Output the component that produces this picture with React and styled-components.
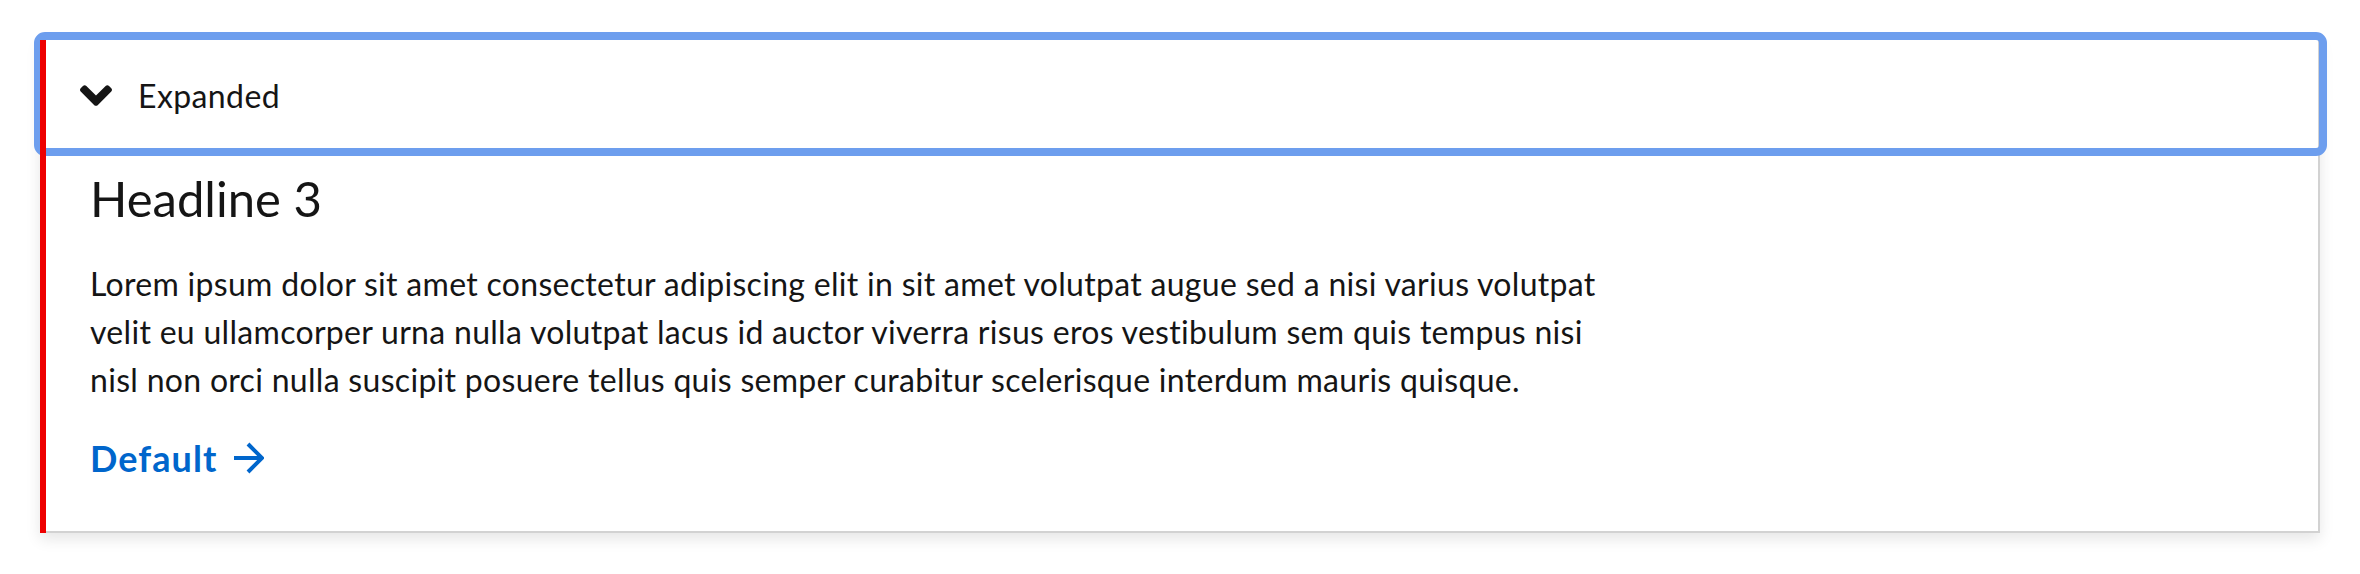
import React from 'react';
import styled, { createGlobalStyle } from 'styled-components';

// Global style for body
const GlobalStyle = createGlobalStyle`
  body {
    margin: 0;
    font-family: 'Lato', 'Liberation Sans', sans-serif;
    background: #ffffff;
    color: #151515;
  }
`;

const Page = styled.div`
  padding: 40px;
`;

const Card = styled.section`
  position: relative;
  background: #fff;
  border-right: 2px solid #d2d2d2;
  border-bottom: 2px solid #d2d2d2;
  box-shadow: 0 6px 14px rgba(3, 3, 3, 0.1);

  &::before {
    content: '';
    position: absolute;
    left: 0;
    top: 0;
    bottom: -2px;
    width: 6px;
    background: #ee0000;
    z-index: 2;
  }
`;

const Toggle = styled.button`
  position: relative;
  display: flex;
  align-items: center;
  gap: 26px;
  width: 100%;
  height: 110px;
  padding: 0 0 0 40px;
  margin: 0;
  border: none;
  background: transparent;
  font-family: inherit;
  font-size: 32px;
  letter-spacing: 0.4px;
  color: #151515;
  cursor: pointer;
  text-align: left;

  &::after {
    content: '';
    position: absolute;
    top: -8px;
    left: -6px;
    right: -9px;
    bottom: -6px;
    border: 8px solid #6d9eee;
    border-radius: 11px;
    pointer-events: none;
  }
`;

const Chevron = styled.svg`
  width: 32px;
  height: 21px;
  flex: none;
  fill: #151515;
`;

const Body = styled.div`
  padding: 18px 0 51px 50px;
`;

const Headline = styled.h3`
  margin: 0 0 32px;
  font-size: 49px;
  line-height: 60px;
  font-weight: 400;
`;

const Text = styled.p`
  margin: 0 0 32px;
  max-width: 1530px;
  font-size: 32px;
  line-height: 48px;
  letter-spacing: 0.3px;
`;

const Link = styled.a`
  display: inline-flex;
  align-items: center;
  gap: 14px;
  font-size: 36px;
  line-height: 44px;
  font-weight: 700;
  letter-spacing: 1.1px;
  color: #0066cc;
  text-decoration: none;
`;

const Arrow = styled.svg`
  width: 32px;
  height: 32px;
  fill: none;
  stroke: #0066cc;
  stroke-width: 2;
`;

const App = () => {
  return (
    <>
      <GlobalStyle />
      <Page>
        <Card>
          <Toggle type="button" aria-expanded="true">
            <Chevron viewBox="0 152 320 208">
              <path d="M143 352.3L7 216.3c-9.4-9.4-9.4-24.6 0-33.9l22.6-22.6c9.4-9.4 24.6-9.4 33.9 0l96.4 96.4 96.4-96.4c9.4-9.4 24.6-9.4 33.9 0l22.6 22.6c9.4 9.4 9.4 24.6 0 33.9l-136 136c-9.4 9.4-24.6 9.4-34 0z" />
            </Chevron>
            Expanded
          </Toggle>
          <Body>
            <Headline>Headline 3</Headline>
            <Text>
              Lorem ipsum dolor sit amet consectetur adipiscing elit in sit amet volutpat augue sed a nisi varius volutpat velit eu ullamcorper urna nulla volutpat lacus id auctor viverra risus eros vestibulum sem quis tempus nisi nisl non orci nulla suscipit posuere tellus quis semper curabitur scelerisque interdum mauris quisque.
            </Text>
            <Link href="#">
              Default
              <Arrow viewBox="4 4 16 16">
                <path d="M5 12h14" />
                <path d="M12 5l7 7-7 7" />
              </Arrow>
            </Link>
          </Body>
        </Card>
      </Page>
    </>
  );
};

export default App;
